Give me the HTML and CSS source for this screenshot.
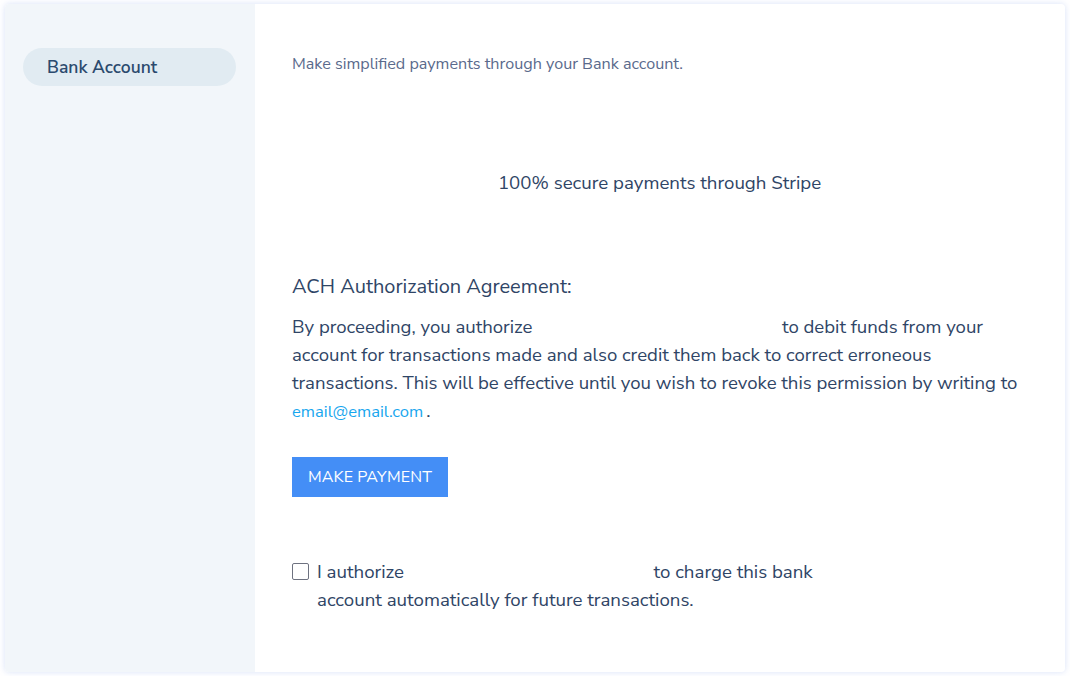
FILE: index.html
```html
<!DOCTYPE html>
<html lang="en">
<head>
<meta charset="utf-8">
<title>Bank Account</title>
<link rel="stylesheet" href="styles.css">
</head>
<body>
<div class="card">
  <aside class="sidebar">
    <div class="tab">Bank Account</div>
  </aside>
  <main class="main">
    <p class="subtitle">Make simplified payments through your Bank account.</p>
    <p class="secure">100% secure payments through Stripe</p>
    <h2 class="title">ACH Authorization Agreement:</h2>
    <p class="para">By proceeding, you authorize <span class="blank"></span> to debit funds from your account for transactions made and also credit them back to correct erroneous transactions. This will be effective until you wish to revoke this permission by writing to <a class="link" href="#">email@email.com</a>.</p>
    <button class="btn">MAKE PAYMENT</button>
    <label class="check">
      <span class="box"></span>
      <span class="check-text">I authorize <span class="blank"></span> to charge this bank account automatically for future transactions.</span>
    </label>
  </main>
</div>
</body>
</html>
```

FILE: styles.css
```css
html, body {
  margin: 0;
  padding: 0;
  background: #ffffff;
}
body {
  padding: 4px 5px 4px 5px;
  font-family: "Nunito Sans", "Open Sans", "Noto Sans", sans-serif;
  color: #2f4566;
}
.card {
  display: flex;
  height: 668px;
  border-radius: 4px;
  background: #ffffff;
  box-shadow: 0 0 6px rgba(120, 150, 230, 0.28);
  overflow: hidden;
}
.sidebar {
  width: 250px;
  flex: none;
  background: #f2f6fa;
  padding: 44px 19px 0 18px;
  box-sizing: border-box;
}
.tab {
  height: 38px;
  border-radius: 19px;
  background: #e1ebf2;
  color: #2b4a6e;
  font-size: 17.5px;
  font-weight: 600;
  line-height: 39px;
  padding-left: 24px;
}
.main {
  flex: 1;
  padding: 50px 30px 0 37px;
}
.subtitle {
  margin: 0;
  font-size: 16.15px;
  line-height: 20px;
  color: #5a6a8c;
}
.secure {
  margin: 96px 0 0;
  text-align: center;
  font-size: 18.7px;
  line-height: 26px;
  padding-right: 8px;
  color: #2f4566;
}
.title {
  margin: 77px 0 0;
  font-size: 20px;
  font-weight: 400;
  line-height: 28px;
  color: #2f4566;
}
.para {
  margin: 12px 0 0;
  font-size: 18.6px;
  line-height: 28px;
  max-width: 740px;
}
.blank {
  display: inline-block;
  width: 240px;
}
.link {
  color: #17a6ee;
  font-size: 16.6px;
  text-decoration: none;
  margin-right: 3px;
}
.btn {
  display: block;
  margin-top: 31px;
  height: 40px;
  padding: 0 16px;
  border: none;
  border-radius: 0;
  background: #448ef6;
  color: #ffffff;
  font-family: inherit;
  font-size: 16px;
  letter-spacing: 0.1px;
}
.check {
  display: flex;
  align-items: flex-start;
  gap: 8px;
  margin-top: 61px;
  font-size: 18.7px;
  line-height: 28px;
  max-width: 545px;
}
.box {
  flex: none;
  width: 17px;
  height: 17px;
  box-sizing: border-box;
  border: 1.5px solid #6e7280;
  border-radius: 2px;
  margin-top: 5px;
}
.check-text {
  flex: 1;
}
```
